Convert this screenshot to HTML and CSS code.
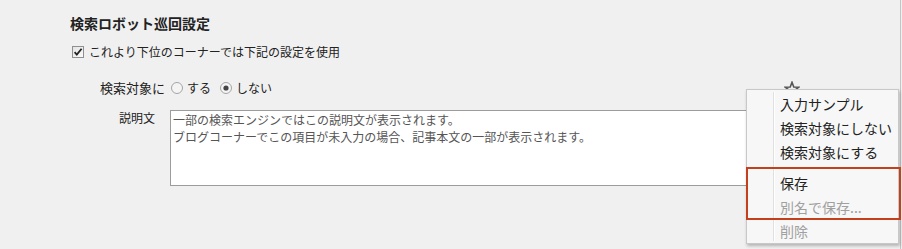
FILE: index.html
```html
<!DOCTYPE html>
<html lang="ja">
<head>
<meta charset="utf-8">
<link rel="stylesheet" href="styles.css">
</head>
<body>
<div class="page">
  <div class="title">検索ロボット巡回設定</div>
  <div class="use-row">
    <span class="check">
      <svg width="12" height="12" viewBox="0 0 12 12"><defs><linearGradient id="cg" x1="0" y1="0" x2="1" y2="1"><stop offset="0" stop-color="#e2e2e2"/><stop offset="1" stop-color="#fbfbfb"/></linearGradient></defs><rect x="0.5" y="0.5" width="11" height="11" fill="url(#cg)" stroke="#8e8f8f"/><path d="M2.6 6.2 L4.8 8.6 L9.6 2.8" fill="none" stroke="#222" stroke-width="1.8"/></svg>
    </span>
    <span class="use-label">これより下位のコーナーでは下記の設定を使用</span>
  </div>
  <div class="radio-row">
    <span class="row-label">検索対象に</span>
    <span class="radio"><svg width="12" height="12" viewBox="0 0 12 12"><circle cx="6" cy="6" r="5.5" fill="#f4f4f4" stroke="#a4a4a4"/></svg></span>
    <span class="opt">する</span>
    <span class="radio"><svg width="12" height="12" viewBox="0 0 12 12"><circle cx="6" cy="6" r="5.5" fill="#f4f4f4" stroke="#a4a4a4"/><circle cx="6" cy="6" r="2.6" fill="#444"/></svg></span>
    <span class="opt last">しない</span>
  </div>
  <div class="desc-row">
    <span class="desc-label">説明文</span>
    <div class="desc-box">一部の検索エンジンではこの説明文が表示されます。<br>ブログコーナーでこの項目が未入力の場合、記事本文の一部が表示されます。</div>
  </div>
</div>

<svg class="star" width="16" height="16" viewBox="0 0 18 18"><path d="M9 1.5 L11 6.8 L16.5 7 L12.2 10.4 L13.7 16 L9 12.8 L4.3 16 L5.8 10.4 L1.5 7 L7 6.8 Z" fill="none" stroke="#555" stroke-width="1.8" stroke-linejoin="miter"/></svg>

<div class="menu">
  <div class="gutter"></div>
  <div class="item">入力サンプル</div>
  <div class="item">検索対象にしない</div>
  <div class="item">検索対象にする</div>
  <div class="sep"></div>
  <div class="item">保存</div>
  <div class="item disabled">別名で保存...</div>
  <div class="item disabled">削除</div>
</div>
<div class="highlight"></div>
</body>
</html>
```

FILE: styles.css
```css
html, body {
  margin: 0;
  padding: 0;
  background: #f0f0f0;
  height: 249px;
  overflow: hidden;
}
body {
  font-family: "Noto Sans CJK JP", "Noto Sans", sans-serif;
  color: #222;
  position: relative;
}
.page {
  width: 901px;
  height: 249px;
  box-sizing: border-box;
  border-right: 1px solid #c4c4c4;
  padding: 12px 0 0 70px;
}
.title {
  height: 22px;
  line-height: 22px;
  font-size: 14px;
  font-weight: bold;
  color: #222;
}
.use-row {
  margin-top: 8px;
  height: 20px;
  display: flex;
  align-items: center;
}
.check {
  display: flex;
  margin-left: 2px;
  width: 12px;
  height: 12px;
}
.use-label {
  margin-left: 5px;
  font-size: 12px;
  line-height: 20px;
}
.radio-row {
  margin-top: 16px;
  height: 20px;
  display: flex;
  align-items: center;
  padding-left: 30px;
}
.row-label {
  font-size: 13px;
  line-height: 20px;
  margin-right: 6px;
}
.radio {
  display: flex;
  width: 12px;
  height: 12px;
}
.opt {
  font-size: 12px;
  line-height: 20px;
  margin-left: 4px;
  margin-right: 9px;
}
.desc-row {
  margin-top: 12px;
  display: flex;
  align-items: flex-start;
  padding-left: 49px;
}
.desc-label {
  font-size: 12px;
  line-height: 16px;
  width: 36px;
  margin-right: 15px;
}
.desc-box {
  width: 590px;
  height: 76px;
  box-sizing: border-box;
  border: 1px solid #9c9c9c;
  background: #fff;
  padding: 0 2px;
  font-size: 12px;
  line-height: 17px;
  color: #555;
}
.star {
  position: absolute;
  left: 784px;
  top: 81px;
}
.menu {
  position: absolute;
  left: 746px;
  top: 89px;
  width: 153px;
  height: 155px;
  box-sizing: border-box;
  background: #f7f7f7;
  border: 1px solid #c8c8c8;
  box-shadow: 1px 2px 3px rgba(0,0,0,0.25);
  padding-top: 2px;
  display: flex;
  flex-direction: column;
}
.gutter {
  position: absolute;
  left: 26px;
  top: 2px;
  bottom: 2px;
  width: 1px;
  background: #e0e0e0;
  border-right: 1px solid #ffffff;
}
.item {
  height: 24px;
  line-height: 24px;
  padding-left: 33px;
  font-size: 14px;
  color: #222;
  white-space: nowrap;
}
.item.disabled {
  color: #a0a0a0;
}
.sep {
  height: 7px;
}
.highlight {
  position: absolute;
  left: 746px;
  top: 167px;
  width: 155px;
  height: 53px;
  box-sizing: border-box;
  border: 2px solid #c2411c;
}
```
